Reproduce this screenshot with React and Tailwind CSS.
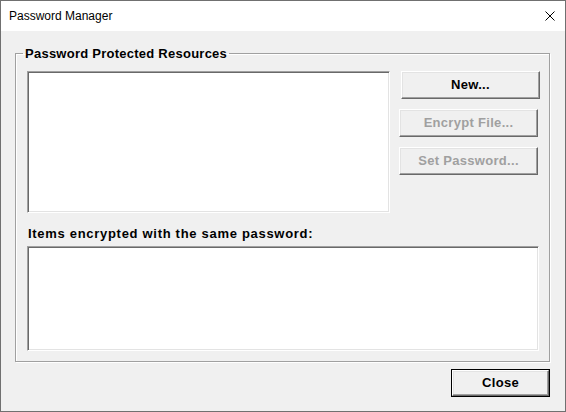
import React from "react";

const font = { fontFamily: '"Liberation Sans", Arial, sans-serif' };

const Button = ({ children, disabled, isDefault, className = "" }) => {
  const inner = (
    <div
      className={`flex h-full w-full items-center justify-center border border-t-white border-l-white border-b-[#696969] border-r-[#696969] bg-[#f0f0f0] text-[13px] font-bold tracking-[0.3px] shadow-[inset_-1px_-1px_0_#a0a0a0,inset_1px_1px_0_#e3e3e3] ${
        disabled ? "text-[#a0a0a0]" : "text-black"
      }`}
    >
      {children}
    </div>
  );
  return (
    <button
      disabled={disabled}
      className={`${isDefault ? "border border-black" : ""} ${className}`}
    >
      {inner}
    </button>
  );
};

const ListBox = ({ className = "" }) => (
  <div
    className={`border border-t-[#a0a0a0] border-l-[#a0a0a0] border-b-white border-r-white bg-white shadow-[inset_1px_1px_0_#696969,inset_-1px_-1px_0_#e3e3e3] ${className}`}
  />
);

export default function App() {
  return (
    <div
      className="flex h-[412px] w-[566px] flex-col border border-[#707070] bg-[#f0f0f0]"
      style={font}
    >
      {/* title bar */}
      <div className="flex h-[30px] shrink-0 items-center justify-between bg-white pl-[8px] pr-[10px]">
        <span className="text-[12px] text-black">Password Manager</span>
        <svg width="10" height="10" viewBox="0 0 10 10" className="text-black">
          <path d="M0.5 0.5 L9.5 9.5 M9.5 0.5 L0.5 9.5" stroke="currentColor" strokeWidth="1" />
        </svg>
      </div>

      {/* body */}
      <div className="flex flex-1 flex-col px-[14px] pt-[15px]">
        <fieldset className="h-[316px] w-[535px] border border-[#a0a0a0] shadow-[inset_1px_1px_0_white,1px_1px_0_white]">
          <legend className="ml-[7px] px-[2px] text-[13px] font-bold leading-[15px] tracking-[0.25px] text-black">
            Password Protected Resources
          </legend>
          <div className="ml-[11px] mt-[10px] flex">
            <ListBox className="h-[142px] w-[363px]" />
            <div className="ml-[9px] flex flex-col gap-[10px]">
              <Button className="ml-[2px] h-[28px] w-[139px]">New...</Button>
              <Button disabled className="h-[28px] w-[139px]">
                Encrypt File...
              </Button>
              <Button disabled className="h-[28px] w-[139px]">
                Set Password...
              </Button>
            </div>
          </div>
          <div className="ml-[12px] mt-[13px] text-[13px] font-bold leading-[15px] tracking-[0.7px] text-black">
            Items encrypted with the same password:
          </div>
          <ListBox className="ml-[11px] mt-[5px] h-[105px] w-[512px]" />
        </fieldset>

        <div className="mt-[7px] flex w-[535px] justify-end">
          <Button isDefault className="h-[28px] w-[99px]">
            Close
          </Button>
        </div>
      </div>
    </div>
  );
}
